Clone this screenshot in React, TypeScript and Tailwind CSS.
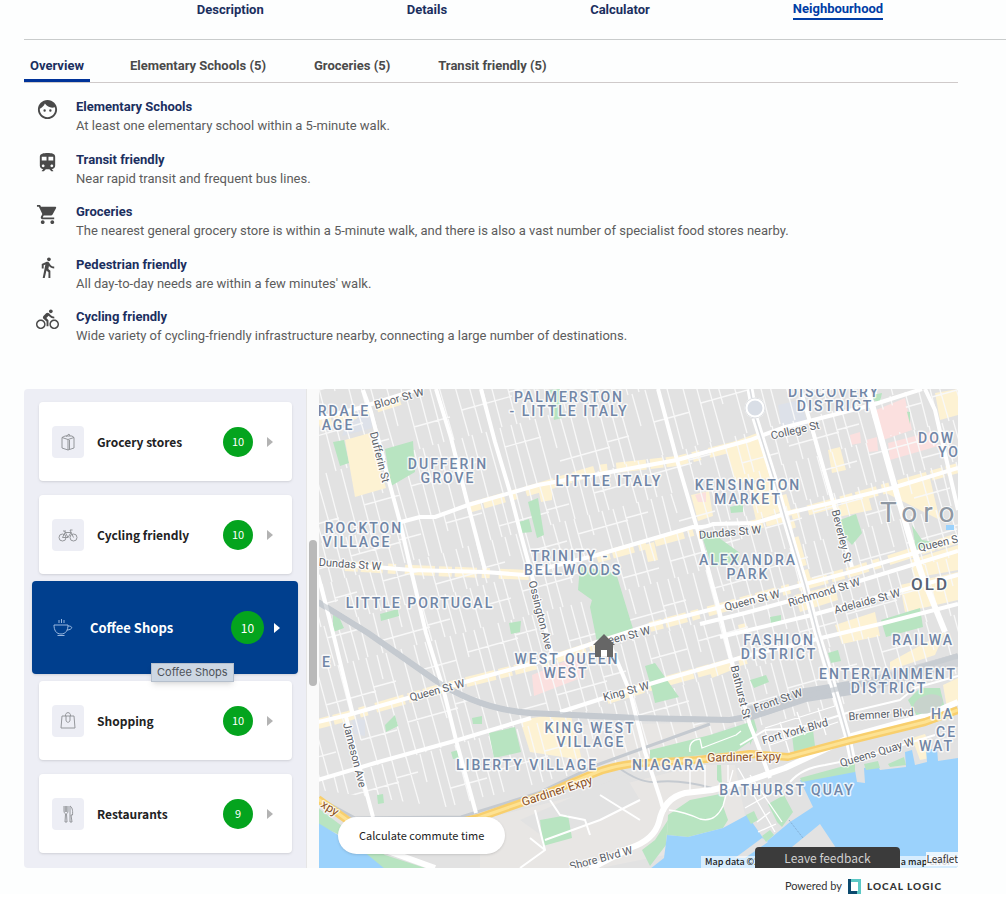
import { useState } from "react";
import type { ReactNode } from "react";
import { MdDirectionsBike, MdDirectionsWalk, MdFace, MdShoppingCart, MdTrain } from "react-icons/md";

const NAV = ["Description", "Details", "Calculator", "Neighbourhood"];
const TABS = ["Overview", "Elementary Schools (5)", "Groceries (5)", "Transit friendly (5)"];

const FEATURES = [
  { icon: MdFace, title: "Elementary Schools", text: "At least one elementary school within a 5-minute walk." },
  { icon: MdTrain, title: "Transit friendly", text: "Near rapid transit and frequent bus lines." },
  {
    icon: MdShoppingCart,
    title: "Groceries",
    text: "The nearest general grocery store is within a 5-minute walk, and there is also a vast number of specialist food stores nearby.",
  },
  { icon: MdDirectionsWalk, title: "Pedestrian friendly", text: "All day-to-day needs are within a few minutes' walk." },
  {
    icon: MdDirectionsBike,
    title: "Cycling friendly",
    text: "Wide variety of cycling-friendly infrastructure nearby, connecting a large number of destinations.",
  },
];

function Glyph({ children }: { children: ReactNode }) {
  return (
    <svg viewBox="0 0 20 20" className="size-5" fill="none" stroke="currentColor" strokeWidth="0.9" strokeLinejoin="round">
      {children}
    </svg>
  );
}

const CARDS = [
  {
    name: "Grocery stores",
    score: 10,
    icon: (
      <Glyph>
        <path d="M4 5.500 10 7.500v10.500L4 16zM10 7.500 16 5.500V16l-6 2M4 5.500 7 4h7l2 1.500M8 4.500 11 2l1 2M11.500 8v9" />
      </Glyph>
    ),
  },
  {
    name: "Cycling friendly",
    score: 10,
    icon: (
      <Glyph>
        <circle cx="4.500" cy="12.500" r="3.500" />
        <circle cx="15.500" cy="12.500" r="3.500" />
        <path d="M4.500 12.500 7 7.500h6l-3 5H4.500M10 12.500 6.500 6M5 6h3M15.500 12.500 12 5h2.500" />
      </Glyph>
    ),
  },
  {
    name: "Coffee Shops",
    score: 10,
    icon: (
      <Glyph>
        <path d="M1 7h14c0 5-2 9-7 9S1 12 1 7zM15 8c6 0 4 4-1 4M4.500 17.500h7M6 2v3M8.500 1v4M11 2v3" />
      </Glyph>
    ),
  },
  {
    name: "Shopping",
    score: 10,
    icon: (
      <Glyph>
        <path d="M4 5h12l1 12H3zM7.500 5C7 .5 13 .5 12.500 5M8 5v4c0 3 4 3 4 0V5" />
      </Glyph>
    ),
  },
  {
    name: "Restaurants",
    score: 9,
    icon: (
      <Glyph>
        <path d="M6 2v5c0 2 1 2 1.500 3L7 18h2l-.5-8C9 9 10 9 10 7V2M7.300 2v6M8.700 2v6M12 18V2c2 1 3 4 2.500 9H13l1 7z" />
      </Glyph>
    ),
  },
];

const MAJOR_ROADS = [
  "M363 390 371 412 388 478 400 522 411 570 426 633 443 688 456 740 476 813",
  "M319 418 359 408 400 395 425 387",
  "M436 389 451 438 468 505 485 570",
  "M481 389 495 442 510 492 521 535 531 572 553 658",
  "M401 522 420 517 435 517 468 505 538 485 677 460 750 440 782 428 872 405 922 389",
  "M319 563 375 567 411 570 485 572 525 575 550 567 597 555 693 527 Q705 528 713 524 L755 523 788 513 835 502 892 488 958 468",
  "M658 389 677 460 697 528 717 602 730 655 750 725 756 740 770 778",
  "M800 389 812 428 833 502 852 567",
  "M318 722 348 715 443 688 538 662 597 642 650 625 717 608 745 600 858 570 918 552 958 538",
  "M700 624 745 613 830 590 958 551",
  "M720 637 812 615 958 575",
  "M318 780 375 763 458 740 531 718M560 712 607 697 663 680 750 655 880 624 958 604",
  "M318 575 333 633 353 715M346 717 373 817",
  "M608 640 620 668 630 692 645 752 660 798 664 812",
  "M925 389 935 410 958 510",
];

const WIDE_ROADS = [
  "M590 869 630 848Q654 840 659 822 664 798 685 793L712 790 745 782 785 768 828 748 852 736 925 716 958 702",
  "M867 389 873 408 885 452 898 498 912 545 922 575 945 632",
  "M385 850 435 868",
];

const SPLIT_ROADS = ["M755 418 775 482 785 518 805 585 817 632 833 685 848 738 852 758", "M750 389 752 400"];

const SHOP_STRIPS = [
  "M319 424 359 413 400 400",
  "M468 508 538 488 597 470 677 461 760 440",
  "M345 566 411 570 530 575",
  "M597 558 693 531",
  "M318 724 348 716 443 688 538 664 597 645",
  "M650 627 717 609 745 601 858 570 958 538",
  "M607 699 663 682 750 658",
  "M750 526 835 503 958 468",
  "M777 480 790 525 806 580",
];

const PARKS = [
  "333,442 344,440 349,463 340,466",
  "385,449 413,441 415,472 391,486",
  "519,522 529,519 532,532 522,533",
  "528,502 538,498 544,535 537,538",
  "380,614 398,609 399,616 381,621",
  "333,615 339,617 344,628 333,632",
  "509,623 521,621 520,632 511,634",
  "580,566 616,573 634,632 610,640 597,642 590,607 592,600 578,590",
  "701,533 715,535 740,553 738,562 712,567",
  "840,520 856,514 862,533 852,545 840,532",
  "912,525 922,540 938,543 916,550",
  "881,620 920,608 923,627 886,637",
  "489,733 515,727 521,752 494,758",
  "385,725 395,715 398,726 386,732",
  "472,718 482,716 482,724 473,724",
  "451,752 458,750 459,758 453,759",
  "377,795 383,794 384,803 378,804",
  "645,666 655,663 679,697 655,703 652,690",
  "650,750 710,735 750,722 755,738 735,752 650,760",
  "318,808 350,832 385,855 425,868 380,868 340,835 318,825",
  "540,820 568,815 572,838 543,846",
  "668,815 690,800 725,793 723,806 728,820 723,828 688,837 667,835",
  "655,840 668,820 666,845 650,866 642,850",
  "908,700 920,688 940,688 946,713 918,718",
  "792,735 813,730 815,746 794,752",
  "828,653 838,650 841,661 831,663",
  "750,680 766,675 769,682 754,688",
  "770,617 781,615 781,622 771,624",
  "750,705 757,730 750,745",
  "717,765 721,765 722,785 717,780",
  "901,411 910,412 910,426 902,426",
  "550,390 560,389 562,418 554,420",
  "730,507 743,504 743,512 731,513",
  "872,395 882,393 880,402 872,400",
];

const SHOP_BLOCKS = [
  "538,488 552,485 552,500 541,502",
  "691,495 709,491 713,516 698,521",
  "644,545 654,542 658,560 648,562",
  "725,445 760,432 772,478 735,483",
  "748,485 772,480 780,512 756,520",
  "935,393 958,389 958,415 940,420",
  "828,450 840,447 846,470 832,473",
  "836,507 868,495 872,510 838,517",
  "520,720 570,712 582,760 530,752",
  "890,662 945,632 935,655 890,670",
  "835,625 875,612 880,636 842,644",
  "900,585 958,572 958,600 905,612",
  "912,738 925,734 935,757 920,760",
  "943,685 958,678 958,705 947,708",
  "738,625 746,623 748,632 740,634",
  "708,668 730,662 732,670 712,678",
  "795,595 835,585 838,600 800,612",
  "880,490 930,478 935,500 940,520",
  "910,560 958,545 958,570 914,578",
];

const PINK_BLOCKS = [
  "876,410 905,398 912,430 883,440",
  "888,443 934,431 938,446 890,460",
  "850,435 860,432 861,443 851,445",
  "866,440 877,437 878,451 868,452",
  "532,675 580,655 586,676 534,696",
  "695,495 706,492 706,502 698,502",
];

const WATER = [
  "318,823 338,835 368,855 385,869 318,869",
  "667,835 688,837 723,828 747,815 766,842 790,822 813,807 800,780 855,770 857,782 865,783 864,768 878,766 880,770 906,767 905,752 912,750 915,765 927,762 926,750 937,748 938,761 958,758 958,869 650,869 664,858",
];

// [text, centre x, baseline y]
const DISTRICTS: [string, number, number][] = [
  ["RDALE", 344, 416],
  ["AGE", 338, 430],
  ["PALMERSTON", 569, 402],
  ["- LITTLE ITALY", 569, 416],
  ["DISCOVERY", 834, 397],
  ["DISTRICT", 835, 411],
  ["DUFFERIN", 448, 469],
  ["GROVE", 448, 483],
  ["LITTLE ITALY", 609, 486],
  ["KENSINGTON", 748, 490],
  ["MARKET", 748, 504],
  ["ROCKTON", 364, 533],
  ["VILLAGE", 357, 547],
  ["TRINITY -", 570, 561],
  ["BELLWOODS", 573, 575],
  ["ALEXANDRA", 748, 565],
  ["PARK", 748, 579],
  ["LITTLE PORTUGAL", 420, 608],
  ["FASHION", 779, 645],
  ["DISTRICT", 779, 659],
  ["WEST QUEEN", 567, 664],
  ["WEST", 566, 678],
  ["ENTERTAINMENT", 888, 679],
  ["DISTRICT", 889, 693],
  ["KING WEST", 590, 733],
  ["VILLAGE", 591, 747],
  ["LIBERTY VILLAGE", 527, 770],
  ["NIAGARA", 669, 770],
  ["BATHURST QUAY", 787, 795],
  ["E", 327, 667],
];

// districts that run past the right edge: [text, left x, baseline y]
const EDGE_DISTRICTS: [string, number, number][] = [
  ["DOW", 918, 443],
  ["YO", 938, 457],
  ["RAILWA", 892, 645],
  ["HA", 931, 719],
  ["CE", 936, 737],
  ["WAT", 919, 751],
];

// [text, centre x, centre y, angle]
const STREETS: [string, number, number, number][] = [
  ["Bloor St W", 399, 398, -16],
  ["Dufferin St", 380, 457, 76],
  ["College St", 795, 430, -13],
  ["Dundas St W", 350, 564, 4],
  ["Dundas St W", 730, 532, -5],
  ["Beverley St", 842, 536, 76],
  ["Queen St W", 752, 600, -14],
  ["Queen S", 938, 543, -13],
  ["Richmond St W", 824, 592, -17],
  ["Adelaide St W", 867, 601, -15],
  ["Ossington Ave", 541, 615, 76],
  ["Queen St W", 437, 690, -15],
  ["een St W", 629, 635, -14],
  ["King St W", 626, 691, -15],
  ["Bathurst St", 741, 692, 76],
  ["Front St W", 778, 700, -19],
  ["Bremner Blvd", 881, 714, -4],
  ["Fort York Blvd", 795, 731, -16],
  ["Queens Quay W", 877, 752, -17],
  ["Jameson Ave", 355, 755, 76],
  ["Shore Blvd W", 601, 858, -15],
];

const BANDS = [330, 372, 418, 475, 544, 585, 627, 670, 722, 780, 840];

function yAt(u: number, base: number) {
  return (base - 0.26 * (u - 319 - 105)) / 1.07;
}

// side streets: short runs between the east-west arteries
function sideStreets() {
  const out: string[] = [];
  for (let b = 0; b < BANDS.length - 1; b++) {
    let u = 190 + b * 3;
    let i = 0;
    while (u < 960) {
      const y1 = yAt(u, BANDS[b]);
      const y2 = yAt(u, BANDS[b + 1]);
      const cut = (i * 5 + b) % 7 === 0 ? (y2 - y1) / 2 : 0;
      const x = (y: number) => Math.round(u + 0.27 * (y - 389));
      out.push(`M${x(y1)} ${Math.round(y1)}L${x(y2 - cut)} ${Math.round(y2 - cut)}`);
      if ((i + b * 2) % 4 === 0) {
        const y = y1 + (y2 - y1) * (0.3 + 0.1 * ((i + b) % 5));
        out.push(`M${x(y)} ${Math.round(y)}l${22 + (i % 3) * 14} ${-6 - (i % 3) * 4}`);
      }
      u += 10 + ((i * 7 + b * 5) % 4) * 2;
      i++;
    }
  }
  return out.join("");
}

const SIDE_STREETS = sideStreets();

const RAIL = "M318 602 368 633 435 680Q478 709 530 713L637 718 730 720Q770 714 805 696L878 680 958 656";
const RAIL_SOUTH = "M318 798 355 818 461 817 538 793 597 765 710 724";
const EXPRESSWAY = "M318 799 350 822 400 836 478 818 538 797 590 775Q615 764 645 763L697 760 750 754 788 757 848 741 925 722 958 710";

function NeighbourhoodMap() {
  return (
    <svg
      viewBox="319 389 639 479"
      preserveAspectRatio="xMidYMid slice"
      className="absolute inset-0 h-full w-full bg-[#e2e2e2]"
      role="img"
      aria-label="Map of the neighbourhood"
    >
      <clipPath id="land">
        <path d="M319 389H958V700L850 733 750 752 620 762 540 793 480 812 319 790z" />
      </clipPath>
      <path d="M580 725 740 722 640 765 560 770zM480 820 700 765 780 765 800 780 790 830 600 868 480 868z" fill="#e8e6e4" />
      <path d="M520 820 600 785 625 775 640 800 600 820 545 838zM735 765 785 765 800 780 813 807 766 842 745 815z" fill="#e2e2e2" />
      <path d="M350 412 370 408 372 428 342 436zM778 405 800 400 808 425 782 430zM352 718 365 720 365 736 354 734z" fill="#dde1e9" />
      <g fill="none" stroke="#fdf2d3" strokeWidth="10" strokeDasharray="13 3 22 5 8 9 30 4">
        {SHOP_STRIPS.map((d) => (
          <path key={d} d={d} />
        ))}
      </g>
      <g fill="#fdf2d3">
        {SHOP_BLOCKS.map((p) => (
          <polygon key={p} points={p} />
        ))}
      </g>
      <g fill="#fbe0df">
        {PINK_BLOCKS.map((p) => (
          <polygon key={p} points={p} />
        ))}
      </g>
      <g clipPath="url(#land)">
        <path d={SIDE_STREETS} fill="none" stroke="#f8f8f8" strokeWidth="1.300" />
      </g>
      <g fill="#b8e4c1">
        {PARKS.map((p) => (
          <polygon key={p} points={p} />
        ))}
      </g>
      <polygon points="345,440 370,433 386,488 355,497" fill="#fdf2d3" />
      <polygon points="878,412 904,400 911,428 883,438" fill="#fbe0df" />
      <g fill="#9bd2fc">
        {WATER.map((p) => (
          <polygon key={p} points={p} />
        ))}
        <rect x="946" y="525" width="8" height="5" />
      </g>
      <path d="M735 858 762 838 768 842 745 858zM792 847 820 824 836 848z" fill="#e2e2e2" />
      <path d="M768 804 784 795 793 812 782 827 777 822zM762 836 770 830 774 835 766 842zM746 815 754 811 758 820 751 824z" fill="#b8e4c1" />
      <path d="M800 778 855 763 855 772 802 782zM864 764 878 761 880 768 866 770zM888 764 904 757 906 765 890 767z" fill="#b8e4c1" />
      <path d="M789 820 803 838" stroke="#7fa6cc" strokeDasharray="1 1" />
      <g fill="none" stroke="#c5cad0">
        <path d={RAIL} strokeWidth="6" />
        <path d="M745 715 805 695 850 688" strokeWidth="14" />
        <path d="M870 684 958 660" strokeWidth="13" stroke="#d0d3d7" />
        <path d={RAIL_SOUTH} strokeWidth="3" />
        <path d="M619 768Q640 783 655 782 680 779 712 788" strokeWidth="2" />
      </g>
      <g fill="none" stroke="#fff" strokeLinejoin="round">
        <path
          d="M669 810Q685 812 700 819 715 823 723 806L733 770M738 768 775 832M750 775 782 822M745 808 780 788M757 822 770 812M758 832 776 824M690 765V790M705 765V788M728 765V782M765 730 772 755M780 722 790 755M797 712 805 735M765 728 835 706M770 745 838 722M818 708 826 735M690 752Q688 740 700 739L702 748 736 735 741 731"
          strokeWidth="1.300"
        />
        <g strokeWidth="4">
          {MAJOR_ROADS.map((d) => (
            <path key={d} d={d} />
          ))}
        </g>
        <g strokeWidth="6">
          {WIDE_ROADS.map((d) => (
            <path key={d} d={d} />
          ))}
        </g>
        <path
          d="M545 840 600 820 640 800M550 800 560 815 585 820 590 835M600 795 640 820M740 745 765 730 800 728 850 712 900 700 915 688 958 676M520 868 545 850 535 810M790 782Q802 768 825 765L860 758 935 735M530 838 545 850"
          strokeWidth="2"
        />
      </g>
      <ellipse cx="928" cy="704" rx="15" ry="9" fill="#c8d3cc" transform="rotate(-18 928 704)" />
      {SPLIT_ROADS.map((d) => (
        <g key={d} fill="none">
          <path d={d} stroke="#fff" strokeWidth="7" />
          <path d={d} stroke="#d9dbde" strokeWidth="1.500" />
        </g>
      ))}
      <circle cx="755" cy="408" r="9" fill="#d9dee6" stroke="#fff" strokeWidth="3" />
      <circle cx="755" cy="408" r="10" fill="none" stroke="#d5d8dc" strokeWidth="0.800" />
      <path d={RAIL} fill="none" stroke="#c5cad0" strokeWidth="5" strokeOpacity="0.700" />
      <path d={EXPRESSWAY} fill="none" stroke="#f8cf6d" strokeWidth="8" strokeLinejoin="round" />
      <path d={EXPRESSWAY} fill="none" stroke="#fde293" strokeWidth="3" strokeLinejoin="round" />

      <g className="font-['Roboto',sans-serif]" paintOrder="stroke" stroke="#ffffff" strokeOpacity="0.800" strokeLinejoin="round">
        <g className="text-[11px]" fill="#5a6068" strokeWidth="2.500" textAnchor="middle">
          {STREETS.map(([text, x, y, angle]) => (
            <text key={`${x}-${y}`} transform={`translate(${x} ${y}) rotate(${angle})`} y="4">
              {text}
            </text>
          ))}
        </g>
        <g className="text-[12px]" fill="#8a4f1f" strokeWidth="2.500" textAnchor="middle">
          <text transform="translate(557 791) rotate(-18)" y="4">Gardiner Expy</text>
          <text transform="translate(744 757) rotate(-1)" y="4">Gardiner Expy</text>
          <text transform="translate(330 808) rotate(32)" y="4">xpy</text>
        </g>
        <g className="text-[14px] font-medium tracking-[2px]" fill="#7186a6" strokeWidth="3">
          <g textAnchor="middle">
            {DISTRICTS.map(([text, x, y]) => (
              <text key={`${x}-${y}`} x={x} y={y}>
                {text}
              </text>
            ))}
          </g>
          {EDGE_DISTRICTS.map(([text, x, y]) => (
            <text key={text} x={x} y={y}>
              {text}
            </text>
          ))}
        </g>
        <text x="880" y="522" className="text-[28px] tracking-[6px]" fill="#8f98a3" strokeWidth="2">
          Toro
        </text>
        <text x="911" y="590" className="text-[17px] font-medium tracking-[2px]" fill="#566275" strokeWidth="3">
          OLD
        </text>
      </g>
      <path d="M604 634 615 645H613V657H607V650H601V657H595V645H593z" fill="#666" />
      <rect x="601" y="650" width="6" height="6" fill="#fff" />
    </svg>
  );
}

export default function App() {
  const [tab, setTab] = useState("Overview");
  const [selected, setSelected] = useState("Coffee Shops");

  return (
    <div className="overflow-x-hidden bg-[#fdfefe] pl-6 font-['Roboto',sans-serif] text-[#4a4a4a]">
      {/* Page sections */}
      <nav className="flex h-10 items-start justify-center gap-[143px] border-b border-[#c9cccc] pl-[50px] text-[13px] leading-[18px] font-bold text-[#1b2f5f]">
        {NAV.map((item) => (
          <a
            key={item}
            href="#"
            className={item === "Neighbourhood" ? "border-b-2 border-[#003da5] text-[#003da5]" : "pt-px"}
          >
            {item}
          </a>
        ))}
      </nav>

      <main className="pr-12">
        <div role="tablist" className="flex items-end gap-8 border-b border-[#cfcaca] pt-4">
          {TABS.map((item) => (
            <button
              key={item}
              role="tab"
              aria-selected={tab === item}
              onClick={() => setTab(item)}
              className={
                tab === item
                  ? "border-b-[3px] border-[#003399] px-[6px] pb-1 text-[13px] leading-[19px] font-bold text-[#1b2f5f]"
                  : "border-b-[3px] border-transparent px-2 pb-1 text-[13px] leading-[19px] font-bold"
              }
            >
              {item}
            </button>
          ))}
        </div>

        <ul className="mt-[14px] flex min-h-[248px] flex-col justify-between">
          {FEATURES.map(({ icon: Icon, title, text }) => (
            <li key={title} className="flex gap-[17px] pl-3">
              <Icon className="mt-px size-[23px] shrink-0" />
              <div className="text-[13px] leading-[19px]">
                <h3 className="font-bold text-[#1b2f5f]">{title}</h3>
                <p className="text-[#5c5c5c]">{text}</p>
              </div>
            </li>
          ))}
        </ul>

        {/* Scores and map */}
        <section className="mt-11 flex overflow-hidden rounded-[4px]">
          <div className="relative flex w-[282px] shrink-0 flex-col gap-[14px] bg-[#edeef5] pt-[13px] pr-[14px] pb-[15px] pl-[15px] font-['Noto_Sans_CJK_SC',sans-serif]">
            {CARDS.map((card) => {
              const on = card.name === selected;
              return (
                <button
                  key={card.name}
                  onClick={() => setSelected(card.name)}
                  className={
                    on
                      ? "-my-[7px] -mr-[6px] -ml-[7px] flex h-[93px] items-center rounded-[4px] bg-[#003f8e] pr-[18px] pl-[21px] text-left text-white shadow-sm"
                      : "flex h-[79px] items-center rounded-[4px] bg-white pr-[19px] pl-[13px] text-left text-[#222] shadow-sm"
                  }
                >
                  <span
                    className={
                      on
                        ? "flex w-5 items-center justify-center text-[#a9c4e8]"
                        : "flex size-8 items-center justify-center rounded-[4px] bg-[#edeef5] text-[#8b8d92]"
                    }
                  >
                    {card.icon}
                  </span>
                  <span className={on ? "ml-[17px] flex-1 text-[13px] leading-5 font-bold" : "ml-[13px] flex-1 text-[12px] leading-5 font-bold"}>
                    {card.name}
                  </span>
                  <span
                    className={
                      on
                        ? "flex size-[33px] items-center justify-center rounded-full bg-[#04a41e] text-[12px] text-white"
                        : "flex size-[30px] items-center justify-center rounded-full bg-[#04a41e] text-[11px] text-white"
                    }
                  >
                    {card.score}
                  </span>
                  <svg viewBox="0 0 6 10" className={on ? "ml-[10px] h-[10px] w-[6px] text-white" : "ml-[14px] h-[10px] w-[6px] text-[#b3b3b3]"}>
                    <path d="M0 0 6 5 0 10z" fill="currentColor" />
                  </svg>
                </button>
              );
            })}
            <div
              role="tooltip"
              className="absolute top-[274px] left-[127px] border border-[#b5bfcc] bg-[#cdd7e3] px-[5px] font-['Inter',sans-serif] text-[11px] leading-[17px] text-[#4d5259] shadow-md"
            >
              Coffee Shops
            </div>
          </div>

          <div className="w-[13px] shrink-0 border-l border-[#e6e6e6] bg-[#fafafa] pt-[151px] pl-[2px]">
            <div className="h-[146px] w-2 rounded-full bg-[#b9b9b9]" />
          </div>

          <div className="relative flex-1 overflow-hidden">
            <NeighbourhoodMap />
            <button className="absolute bottom-[14px] left-[19px] rounded-full bg-white px-[21px] font-['Noto_Sans_CJK_SC',sans-serif] text-[11px] leading-[37px] text-[#222] shadow-sm">
              Calculate commute time
            </button>
            <div className="absolute right-0 bottom-0 flex w-[257px] justify-between bg-white/60 pr-[7px] pl-1 font-['Noto_Sans_CJK_SC',sans-serif] text-[9px] leading-[12px] font-medium whitespace-nowrap text-[#222]">
              <span>Map data ©2</span>
              <a href="#">t a map error</a>
            </div>
            <a href="#" className="absolute right-0 bottom-[2px] bg-white/80 font-['Noto_Sans_CJK_SC',sans-serif] text-[10px] leading-[14px] text-[#333]">
              Leaflet
            </a>
            <button className="absolute right-[58px] bottom-0 w-[145px] rounded-t-[4px] bg-[#3b3b3b] font-['Noto_Sans_CJK_SC',sans-serif] text-[12px] leading-[21px] text-[#d0d0d0]">
              Leave feedback
            </button>
          </div>
        </section>

        {/* Credit */}
        <footer className="flex items-center justify-end gap-[6px] pt-[10px] pr-4 font-['Lato',sans-serif] leading-4 text-[#333]">
          <span className="text-[11px]">Powered by</span>
          <svg viewBox="0 0 13 15" className="h-[15px] w-[13px]">
            <path d="M0 0H13V15H0z" fill="#5cc8c5" />
            <path d="M0 0H3V12H9V15H0z" fill="#0b4a6e" />
            <path d="M3 3H10V12H3z" fill="#fff" />
          </svg>
          <span className="text-[10px] font-black tracking-[1px]">LOCAL LOGIC</span>
        </footer>
      </main>
    </div>
  );
}
